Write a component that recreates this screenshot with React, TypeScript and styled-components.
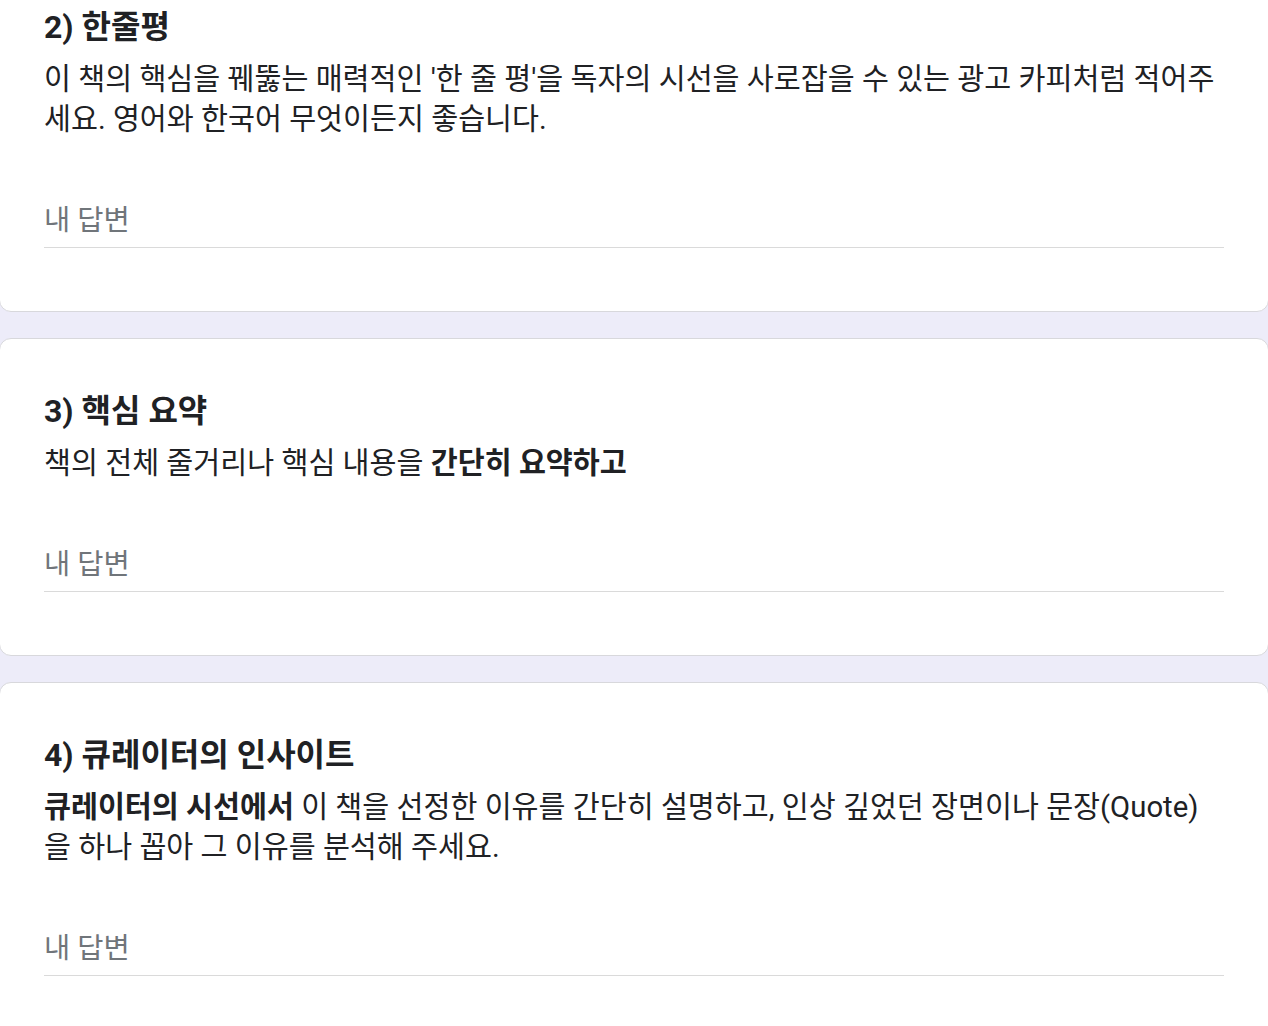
import React from 'react';
import styled, { createGlobalStyle } from 'styled-components';

interface questionProps {
  title: string;
  description: React.ReactNode;
}

const questions: questionProps[] = [
  {
    title: '2) 한줄평',
    description:
      "이 책의 핵심을 꿰뚫는 매력적인 '한 줄 평'을 독자의 시선을 사로잡을 수 있는 광고 카피처럼 적어주세요. 영어와 한국어 무엇이든지 좋습니다.",
  },
  {
    title: '3) 핵심 요약',
    description: (
      <>
        책의 전체 줄거리나 핵심 내용을 <b>간단히 요약하고</b>
      </>
    ),
  },
  {
    title: '4) 큐레이터의 인사이트',
    description: (
      <>
        <b>큐레이터의 시선에서</b> 이 책을 선정한 이유를 간단히 설명하고, 인상 깊었던 장면이나
        문장(Quote)을 하나 꼽아 그 이유를 분석해 주세요.
      </>
    ),
  },
];

const App = () => {
  return (
    <>
      <GlobalStyle />
      <Page>
        {questions.map((item) => (
          <Card key={item.title}>
            <Title>{item.title}</Title>
            <Description>{item.description}</Description>
            <Answer placeholder="내 답변" />
          </Card>
        ))}
      </Page>
    </>
  );
};

const GlobalStyle = createGlobalStyle`
  body {
    margin: 0;
    background: #edecf9;
    font-family: Roboto, "Noto Sans CJK KR", sans-serif;
    color: #202124;
    overflow: hidden;
  }
`;

const Page = styled.div`
  display: flex;
  flex-direction: column;
  gap: 26px;
  margin: -46px -1px 0;
`;

const Card = styled.section`
  display: flex;
  flex-direction: column;
  background: #fff;
  border: 1px solid #d8d8dc;
  border-radius: 12px;
  padding: 52px 44px 63px;
`;

const Title = styled.h2`
  margin: 0 0 12px;
  font-size: 32px;
  line-height: 40px;
  font-weight: 700;
  color: #202124;
`;

const Description = styled.p`
  margin: 0 0 60px;
  font-size: 29.3px;
  line-height: 40px;
  font-weight: 400;
  color: #202124;

  & b {
    font-weight: 700;
  }
`;

const Answer = styled.input`
  border: none;
  border-bottom: 1px solid #dadada;
  padding: 1px 0 7px;
  height: 40px;
  box-sizing: content-box;
  font-family: Roboto, "Noto Sans CJK KR", sans-serif;
  font-size: 28.5px;
  color: #202124;
  background: transparent;
  outline: none;

  &::placeholder {
    color: #70757a;
  }
`;

export default App;
